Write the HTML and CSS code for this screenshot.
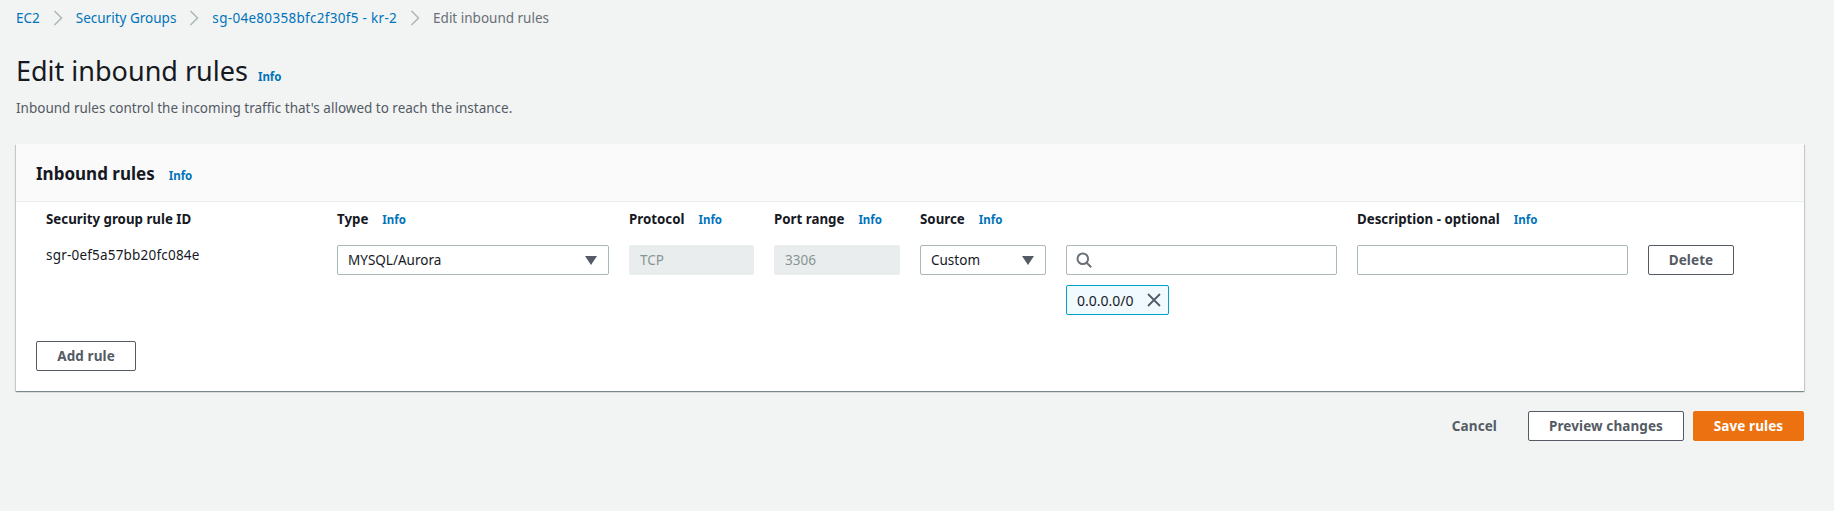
FILE: index.html
```html
<!DOCTYPE html>
<html lang="en">
<head>
    <meta charset="UTF-8">
    <meta name="viewport" content="width=device-width, initial-scale=1.0">
    <title>Edit inbound rules</title>
    <link rel="stylesheet" href="styles.css">
</head>
<body>
    <nav class="breadcrumbs">
        <a href="#">EC2</a>
        <svg class="crumb-sep" viewBox="0 0 10 16"><path d="M1.5 1l7 7-7 7"/></svg>
        <a href="#">Security Groups</a>
        <svg class="crumb-sep" viewBox="0 0 10 16"><path d="M1.5 1l7 7-7 7"/></svg>
        <a class="crumb-id" href="#">sg-04e80358bfc2f30f5 - kr-2</a>
        <svg class="crumb-sep" viewBox="0 0 10 16"><path d="M1.5 1l7 7-7 7"/></svg>
        <span>Edit inbound rules</span>
    </nav>

    <div class="page-title">
        <h1>Edit inbound rules</h1>
        <a class="info" href="#">Info</a>
    </div>
    <p class="page-desc">Inbound rules control the incoming traffic that's allowed to reach the instance.</p>

    <section class="card">
        <header class="card-header">
            <h2>Inbound rules</h2>
            <a class="info" href="#">Info</a>
        </header>
        <div class="card-body">
            <div class="rule-grid">
                <div class="col-head"><b>Security group rule ID</b></div>
                <div class="col-head"><b>Type</b><a class="info" href="#">Info</a></div>
                <div class="col-head"><b>Protocol</b><a class="info" href="#">Info</a></div>
                <div class="col-head"><b>Port range</b><a class="info" href="#">Info</a></div>
                <div class="col-head"><b>Source</b><a class="info" href="#">Info</a></div>
                <div></div>
                <div class="col-head"><b>Description - optional</b><a class="info" href="#">Info</a></div>
                <div></div>

                <div class="rule-id">sgr-0ef5a57bb20fc084e</div>
                <div class="field select">MYSQL/Aurora<span class="caret"></span></div>
                <div class="field disabled">TCP</div>
                <div class="field disabled">3306</div>
                <div class="field select">Custom<span class="caret"></span></div>
                <div class="source-cell">
                    <div class="field search">
                        <svg class="search-icon" viewBox="0 0 16 16"><circle cx="6.8" cy="6.8" r="5.3"/><path d="M10.7 10.7l4.5 4.5"/></svg>
                    </div>
                    <div class="chip">0.0.0.0/0
                        <svg class="chip-x" viewBox="0 0 14 14"><path d="M1 1l12 12M13 1L1 13"/></svg>
                    </div>
                </div>
                <div class="field"></div>
                <button class="btn btn-delete">Delete</button>
            </div>
            <button class="btn btn-add">Add rule</button>
        </div>
    </section>

    <div class="actions">
        <a class="cancel" href="#">Cancel</a>
        <button class="btn btn-preview">Preview changes</button>
        <button class="btn btn-save">Save rules</button>
    </div>
</body>
</html>
```

FILE: styles.css
```css
body {
    background-color: #f2f3f3;
    color: #16191f;
    font-family: "Noto Sans", Roboto, sans-serif;
    font-size: 13.5px;
    margin: 0;
    height: 511px;
    overflow: hidden;
    padding: 0 30px 0 16px;
}
a {
    color: #0073bb;
    text-decoration: none;
}
.breadcrumbs {
    display: flex;
    align-items: center;
    height: 20px;
    padding-top: 8px;
    color: #687078;
}
.crumb-sep {
    width: 10px;
    height: 16px;
    margin: 0 13px;
    fill: none;
    stroke: #aab7b8;
    stroke-width: 1.5;
}
.crumb-id {
    letter-spacing: 0.3px;
}
.page-title {
    display: flex;
    align-items: baseline;
    margin-top: 27px;
}
.page-title h1 {
    font-size: 27px;
    font-weight: 400;
    line-height: 32px;
    margin: 0;
}
.info {
    font-size: 11.5px;
    font-weight: 700;
    margin-left: 10px;
}
.page-desc {
    color: #545b64;
    line-height: 20px;
    margin: 11px 0 0;
}
.card {
    background-color: #ffffff;
    box-shadow: 0 1px 1px 0 rgba(0, 28, 36, 0.3), 1px 1px 1px 0 rgba(0, 28, 36, 0.15), -1px 1px 1px 0 rgba(0, 28, 36, 0.15);
    margin-top: 26px;
    height: 247px;
}
.card-header {
    display: flex;
    align-items: baseline;
    background-color: #fafafa;
    border-bottom: 1px solid #eaeded;
    box-sizing: border-box;
    height: 58px;
    padding: 18px 20px 0;
}
.card-header h2 {
    font-size: 17px;
    font-weight: 700;
    line-height: 24px;
    margin: 0;
}
.card-header .info {
    margin-left: 14px;
}
.card-body {
    padding: 0 20px;
}
.rule-grid {
    display: grid;
    grid-template-columns: 271px 272px 125px 126px 126px 271px 271px 86px;
    column-gap: 20px;
    row-gap: 16px;
    align-items: start;
    padding: 7px 0 0 10px;
}
.col-head {
    display: flex;
    align-items: baseline;
    font-size: 13.3px;
    height: 20px;
    line-height: 20px;
}
.col-head .info {
    margin-left: 14px;
}
.rule-id {
    line-height: 20px;
    letter-spacing: 0.2px;
}
.field {
    background-color: #ffffff;
    border: 1px solid #aab7b8;
    border-radius: 2px;
    box-sizing: border-box;
    display: flex;
    align-items: center;
    justify-content: space-between;
    height: 30px;
    padding: 0 10px;
}
.field.disabled {
    background-color: #eaeded;
    border-color: #eaeded;
    color: #879596;
}
.caret {
    border-left: 6px solid transparent;
    border-right: 6px solid transparent;
    border-top: 9px solid #545b64;
    margin-right: 1px;
}
.search {
    justify-content: flex-start;
    padding-left: 9px;
}
.search-icon {
    width: 16px;
    height: 16px;
    fill: none;
    stroke: #687078;
    stroke-width: 2;
}
.chip {
    display: flex;
    align-items: center;
    justify-content: space-between;
    background-color: #f1faff;
    border: 1px solid #00a1c9;
    border-radius: 2px;
    box-sizing: border-box;
    font-size: 14px;
    width: 103px;
    height: 30px;
    margin-top: 10px;
    padding: 0 7px 0 10px;
}
.chip-x {
    width: 14px;
    height: 14px;
    fill: none;
    stroke: #545b64;
    stroke-width: 1.8;
}
.btn {
    background-color: #ffffff;
    border: 1px solid #545b64;
    border-radius: 2px;
    box-sizing: border-box;
    color: #545b64;
    font-family: inherit;
    font-size: 13.5px;
    font-weight: 700;
    letter-spacing: 0.1px;
    height: 30px;
    padding: 0;
}
.btn-delete {
    width: 86px;
}
.btn-add {
    display: block;
    width: 100px;
    margin-top: 26px;
}
.actions {
    display: flex;
    align-items: center;
    justify-content: flex-end;
    margin-top: 20px;
}
.cancel {
    color: #545b64;
    font-weight: 700;
    letter-spacing: 0.1px;
    margin-right: 31px;
}
.btn-preview {
    width: 156px;
    margin-right: 9px;
}
.btn-save {
    background-color: #ec7211;
    border-color: #ec7211;
    color: #ffffff;
    width: 111px;
}
```
